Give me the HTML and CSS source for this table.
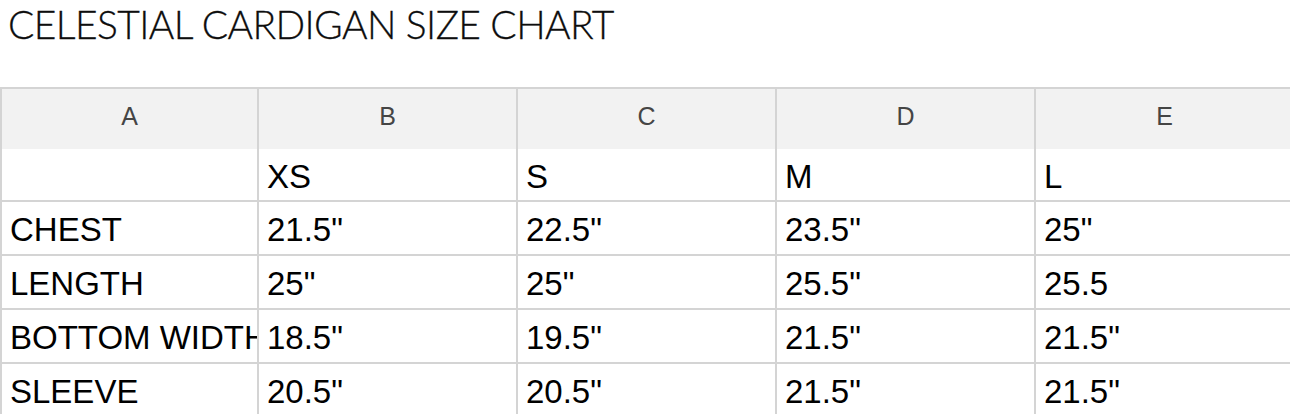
FILE: index.html
```html
<!DOCTYPE html>
<html lang="en">
<head>
<meta charset="utf-8">
<title>Celestial Cardigan Size Chart</title>
<link rel="stylesheet" href="styles.css">
</head>
<body>
<main class="page">
  <h1 class="title">CELESTIAL CARDIGAN SIZE CHART</h1>
  <div class="sheet">
    <div class="cell head">A</div>
    <div class="cell head">B</div>
    <div class="cell head">C</div>
    <div class="cell head">D</div>
    <div class="cell head">E</div>

    <div class="cell first"></div>
    <div class="cell first">XS</div>
    <div class="cell first">S</div>
    <div class="cell first">M</div>
    <div class="cell first">L</div>

    <div class="cell">CHEST</div>
    <div class="cell">21.5"</div>
    <div class="cell">22.5"</div>
    <div class="cell">23.5"</div>
    <div class="cell">25"</div>

    <div class="cell">LENGTH</div>
    <div class="cell">25"</div>
    <div class="cell">25"</div>
    <div class="cell">25.5"</div>
    <div class="cell">25.5</div>

    <div class="cell">BOTTOM WIDTH</div>
    <div class="cell">18.5"</div>
    <div class="cell">19.5"</div>
    <div class="cell">21.5"</div>
    <div class="cell">21.5"</div>

    <div class="cell">SLEEVE</div>
    <div class="cell">20.5"</div>
    <div class="cell">20.5"</div>
    <div class="cell">21.5"</div>
    <div class="cell">21.5"</div>
  </div>
</main>
</body>
</html>
```

FILE: styles.css
```css
html, body {
  margin: 0;
  padding: 0;
  background: #ffffff;
  overflow: hidden;
}

.page {
  width: 1290px;
  height: 414px;
  overflow: hidden;
}

.title {
  margin: 0;
  padding: 4px 0 0 8px;
  height: 87px;
  box-sizing: border-box;
  font-family: "Lato", "Liberation Sans", sans-serif;
  font-weight: 300;
  font-size: 39px;
  line-height: 40px;
  letter-spacing: -0.6px;
  color: #0d0d0d;
  -webkit-text-stroke: 0.3px #0d0d0d;
}

.sheet {
  display: grid;
  grid-template-columns: 257px repeat(4, 259px);
  grid-template-rows: 60px 53px repeat(4, 54px);
  width: max-content;
  border-top: 2px solid #d4d4d4;
  border-left: 2px solid #d4d4d4;
}

.cell {
  border-right: 2px solid #d4d4d4;
  border-bottom: 2px solid #d4d4d4;
  font-family: "Liberation Sans", Arial, sans-serif;
  font-size: 33px;
  color: #000000;
  padding: 3px 8px 0 8px;
  display: flex;
  align-items: center;
  white-space: nowrap;
  overflow: hidden;
  line-height: 1;
}

.head {
  background: #f2f2f2;
  border-bottom: none;
  justify-content: center;
  font-size: 25px;
  color: #454545;
  padding: 0 0 6px 0;
}
```
